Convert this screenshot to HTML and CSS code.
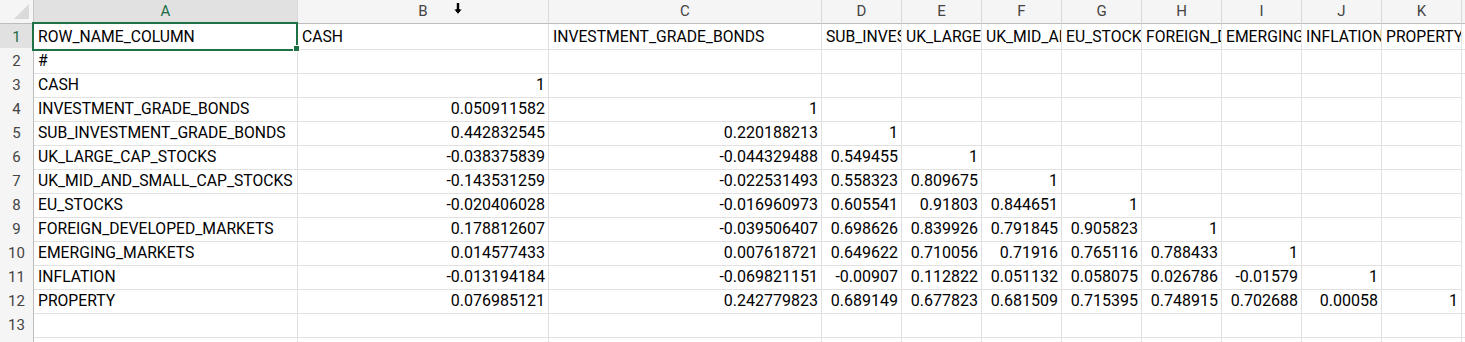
FILE: index.html
```
<!DOCTYPE html>
<html lang="en">
<head>
<meta charset="UTF-8">
<meta name="viewport" content="width=device-width, initial-scale=1.0">
<title>Correlations</title>
<link rel="stylesheet" href="styles.css">
</head>
<body>
<div class="sheet">
    <div class="row head">
        <div class="corner"><span class="corner-tri"></span></div>
        <div class="col-head selected">A</div>
        <div class="col-head">B
            <svg class="cursor" xmlns="http://www.w3.org/2000/svg" viewBox="0 0 10 13">
                <path d="M3.2 0.5h3.6v6.5h2.7L5 12.5 0.5 7h2.7z" fill="#000" stroke="#fff" stroke-width="1"/>
            </svg>
        </div>
        <div class="col-head">C</div>
        <div class="col-head">D</div>
        <div class="col-head">E</div>
        <div class="col-head">F</div>
        <div class="col-head">G</div>
        <div class="col-head">H</div>
        <div class="col-head">I</div>
        <div class="col-head">J</div>
        <div class="col-head">K</div>
        <div class="col-head">L</div>
    </div>

    <div class="row">
        <div class="row-head selected">1</div>
        <div class="cell active">ROW_NAME_COLUMN<span class="fill-handle"></span></div>
        <div class="cell">CASH</div>
        <div class="cell">INVESTMENT_GRADE_BONDS</div>
        <div class="cell">SUB_INVESTMENT_GRADE_BONDS</div>
        <div class="cell">UK_LARGE_CAP_STOCKS</div>
        <div class="cell">UK_MID_AND_SMALL_CAP_STOCKS</div>
        <div class="cell">EU_STOCKS</div>
        <div class="cell">FOREIGN_DEVELOPED_MARKETS</div>
        <div class="cell">EMERGING_MARKETS</div>
        <div class="cell">INFLATION</div>
        <div class="cell">PROPERTY</div>
        <div class="cell"></div>
    </div>

    <div class="row">
        <div class="row-head">2</div>
        <div class="cell">#</div>
        <div class="cell"></div><div class="cell"></div><div class="cell"></div><div class="cell"></div><div class="cell"></div>
        <div class="cell"></div><div class="cell"></div><div class="cell"></div><div class="cell"></div><div class="cell"></div><div class="cell"></div>
    </div>

    <div class="row">
        <div class="row-head">3</div>
        <div class="cell">CASH</div>
        <div class="cell num">1</div>
        <div class="cell"></div><div class="cell"></div><div class="cell"></div><div class="cell"></div>
        <div class="cell"></div><div class="cell"></div><div class="cell"></div><div class="cell"></div><div class="cell"></div>
    </div>

    <div class="row">
        <div class="row-head">4</div>
        <div class="cell">INVESTMENT_GRADE_BONDS</div>
        <div class="cell num">0.050911582</div>
        <div class="cell num">1</div>
        <div class="cell"></div><div class="cell"></div><div class="cell"></div>
        <div class="cell"></div><div class="cell"></div><div class="cell"></div><div class="cell"></div><div class="cell"></div>
    </div>

    <div class="row">
        <div class="row-head">5</div>
        <div class="cell">SUB_INVESTMENT_GRADE_BONDS</div>
        <div class="cell num">0.442832545</div>
        <div class="cell num">0.220188213</div>
        <div class="cell num">1</div>
        <div class="cell"></div><div class="cell"></div>
        <div class="cell"></div><div class="cell"></div><div class="cell"></div><div class="cell"></div><div class="cell"></div>
    </div>

    <div class="row">
        <div class="row-head">6</div>
        <div class="cell">UK_LARGE_CAP_STOCKS</div>
        <div class="cell num">-0.038375839</div>
        <div class="cell num">-0.044329488</div>
        <div class="cell num">0.549455</div>
        <div class="cell num">1</div>
        <div class="cell"></div>
        <div class="cell"></div><div class="cell"></div><div class="cell"></div><div class="cell"></div><div class="cell"></div>
    </div>

    <div class="row">
        <div class="row-head">7</div>
        <div class="cell">UK_MID_AND_SMALL_CAP_STOCKS</div>
        <div class="cell num">-0.143531259</div>
        <div class="cell num">-0.022531493</div>
        <div class="cell num">0.558323</div>
        <div class="cell num">0.809675</div>
        <div class="cell num">1</div>
        <div class="cell"></div><div class="cell"></div><div class="cell"></div><div class="cell"></div><div class="cell"></div>
    </div>

    <div class="row">
        <div class="row-head">8</div>
        <div class="cell">EU_STOCKS</div>
        <div class="cell num">-0.020406028</div>
        <div class="cell num">-0.016960973</div>
        <div class="cell num">0.605541</div>
        <div class="cell num">0.91803</div>
        <div class="cell num">0.844651</div>
        <div class="cell num">1</div>
        <div class="cell"></div><div class="cell"></div><div class="cell"></div><div class="cell"></div>
    </div>

    <div class="row">
        <div class="row-head">9</div>
        <div class="cell">FOREIGN_DEVELOPED_MARKETS</div>
        <div class="cell num">0.178812607</div>
        <div class="cell num">-0.039506407</div>
        <div class="cell num">0.698626</div>
        <div class="cell num">0.839926</div>
        <div class="cell num">0.791845</div>
        <div class="cell num">0.905823</div>
        <div class="cell num">1</div>
        <div class="cell"></div><div class="cell"></div><div class="cell"></div>
    </div>

    <div class="row">
        <div class="row-head">10</div>
        <div class="cell">EMERGING_MARKETS</div>
        <div class="cell num">0.014577433</div>
        <div class="cell num">0.007618721</div>
        <div class="cell num">0.649622</div>
        <div class="cell num">0.710056</div>
        <div class="cell num">0.71916</div>
        <div class="cell num">0.765116</div>
        <div class="cell num">0.788433</div>
        <div class="cell num">1</div>
        <div class="cell"></div><div class="cell"></div>
    </div>

    <div class="row">
        <div class="row-head">11</div>
        <div class="cell">INFLATION</div>
        <div class="cell num">-0.013194184</div>
        <div class="cell num">-0.069821151</div>
        <div class="cell num">-0.00907</div>
        <div class="cell num">0.112822</div>
        <div class="cell num">0.051132</div>
        <div class="cell num">0.058075</div>
        <div class="cell num">0.026786</div>
        <div class="cell num">-0.01579</div>
        <div class="cell num">1</div>
        <div class="cell"></div>
    </div>

    <div class="row">
        <div class="row-head">12</div>
        <div class="cell">PROPERTY</div>
        <div class="cell num">0.076985121</div>
        <div class="cell num">0.242779823</div>
        <div class="cell num">0.689149</div>
        <div class="cell num">0.677823</div>
        <div class="cell num">0.681509</div>
        <div class="cell num">0.715395</div>
        <div class="cell num">0.748915</div>
        <div class="cell num">0.702688</div>
        <div class="cell num">0.00058</div>
        <div class="cell num">1</div>
        <div class="cell"></div>
    </div>

    <div class="row">
        <div class="row-head">13</div>
        <div class="cell"></div><div class="cell"></div><div class="cell"></div><div class="cell"></div><div class="cell"></div><div class="cell"></div>
        <div class="cell"></div><div class="cell"></div><div class="cell"></div><div class="cell"></div><div class="cell"></div><div class="cell"></div>
    </div>

    <div class="row">
        <div class="row-head">14</div>
        <div class="cell"></div><div class="cell"></div><div class="cell"></div><div class="cell"></div><div class="cell"></div><div class="cell"></div>
        <div class="cell"></div><div class="cell"></div><div class="cell"></div><div class="cell"></div><div class="cell"></div><div class="cell"></div>
    </div>
</div>
</body>
</html>
```

FILE: styles.css
```
* {
    margin: 0;
    padding: 0;
    box-sizing: border-box;
}

body {
    background-color: #fff;
    height: 100vh;
    overflow: hidden;
    font-family: Roboto, 'Liberation Sans', sans-serif;
    font-size: 15.7px;
    color: #000;
}

.sheet {
    width: 1465px;
    overflow: hidden;
}

.row {
    display: grid;
    grid-template-columns: 34px 264px 251px 273px repeat(8, 80px) 80px;
    height: 24px;
}

.corner,
.col-head,
.row-head {
    background-color: #f5f5f5;
    color: #444;
    font-size: 15px;
}

.corner {
    border-right: 1px solid #c8c8c8;
    border-bottom: 1px solid #bdbdbd;
    display: flex;
    align-items: flex-end;
    justify-content: flex-end;
    padding: 0 4px 4px 0;
}

.corner-tri {
    width: 0;
    height: 0;
    border-left: 15px solid transparent;
    border-bottom: 15px solid #dadada;
}

.col-head {
    position: relative;
    text-align: center;
    line-height: 23px;
    border-right: 1px solid #d9d9d9;
    border-bottom: 1px solid #bdbdbd;
}

.col-head.selected,
.row-head.selected {
    background-color: #e1e1e1;
    color: #1d6b45;
}

.row-head {
    text-align: center;
    line-height: 24px;
    padding-top: 1px;
    border-right: 1px solid #bdbdbd;
    border-bottom: 1px solid #e1e1e1;
}

.cell {
    position: relative;
    border-right: 1px solid #e1e1e1;
    border-bottom: 1px solid #e1e1e1;
    padding: 1px 3px 0 4px;
    line-height: 23px;
    white-space: nowrap;
    overflow: hidden;
}

.cell.num {
    text-align: right;
    font-size: 16px;
}

.cell.active {
    overflow: visible;
}

.cell.active::after {
    content: '';
    position: absolute;
    left: -2px;
    top: -2px;
    right: -1px;
    bottom: -2px;
    border: 2px solid #1e7145;
    pointer-events: none;
}

.fill-handle {
    position: absolute;
    right: -3px;
    bottom: -3px;
    width: 7px;
    height: 7px;
    background-color: #1e7145;
    border: 1px solid #fff;
    z-index: 1;
}

.cursor {
    position: absolute;
    left: 155px;
    top: 2px;
    width: 10px;
    height: 13px;
}
```
